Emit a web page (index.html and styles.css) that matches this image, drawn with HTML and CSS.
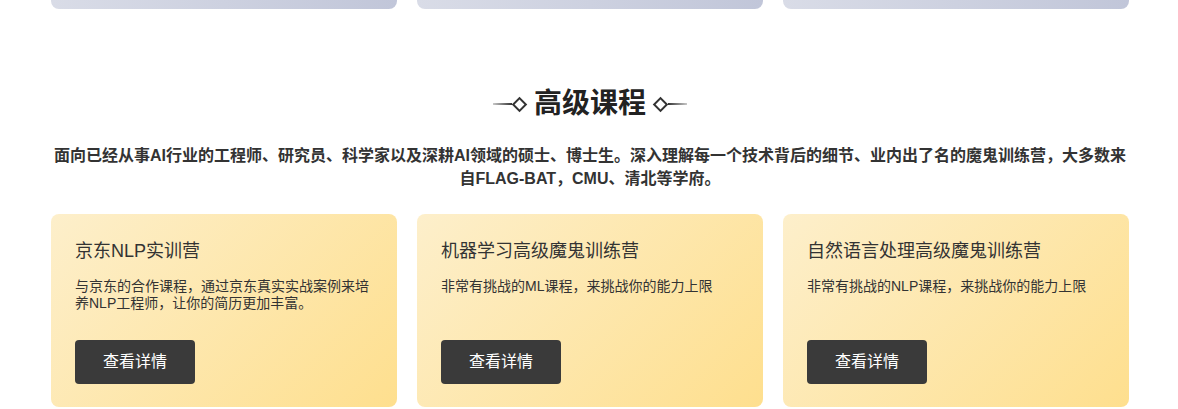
FILE: index.html
```html
<!DOCTYPE html>
<html lang="zh-CN">
<head>
    <meta charset="UTF-8">
    <meta name="viewport" content="width=device-width, initial-scale=1.0">
    <title>高级课程</title>
    <link rel="stylesheet" href="styles.css">
</head>
<body>
    <!-- 上一节课程卡片的底部 -->
    <div class="container top-row">
        <div class="card-tail"></div>
        <div class="card-tail"></div>
        <div class="card-tail"></div>
    </div>

    <section class="container advanced">
        <h2 class="section-title">
            <span class="deco deco-left"><i class="line"></i><i class="diamond"></i></span>
            高级课程
            <span class="deco deco-right"><i class="diamond"></i><i class="line"></i></span>
        </h2>
        <p class="section-desc">面向已经从事AI行业的工程师、研究员、科学家以及深耕AI领域的硕士、博士生。深入理解每一个技术背后的细节、业内出了名的魔鬼训练营，大多数来自FLAG-BAT，CMU、清北等学府。</p>

        <div class="course-list">
            <div class="course-card">
                <h3>京东NLP实训营</h3>
                <p>与京东的合作课程，通过京东真实实战案例来培养NLP工程师，让你的简历更加丰富。</p>
                <a class="btn" href="#">查看详情</a>
            </div>
            <div class="course-card">
                <h3>机器学习高级魔鬼训练营</h3>
                <p>非常有挑战的ML课程，来挑战你的能力上限</p>
                <a class="btn" href="#">查看详情</a>
            </div>
            <div class="course-card">
                <h3>自然语言处理高级魔鬼训练营</h3>
                <p>非常有挑战的NLP课程，来挑战你的能力上限</p>
                <a class="btn" href="#">查看详情</a>
            </div>
        </div>
    </section>
</body>
</html>
```

FILE: styles.css
```css
/* 全局 */
body {
    margin: 0;
    font-family: "Liberation Sans", "Noto Sans CJK SC", sans-serif;
    background-color: #ffffff;
    color: #333333;
}

.container {
    width: 1078px;
    margin-left: calc(50% - 538px);
}

/* 上一节卡片的尾部 */
.top-row {
    display: grid;
    grid-template-columns: repeat(3, 1fr);
    gap: 20px;
}
.card-tail {
    height: 9px;
    border-radius: 0 0 8px 8px;
    background: linear-gradient(90deg, #d9dce7, #c1c6d9);
}

/* 标题 */
.advanced {
    padding-top: 75px;
}
.section-title {
    display: flex;
    align-items: center;
    justify-content: center;
    gap: 7px;
    margin: 0;
    font-size: 28px;
    line-height: 40px;
    font-weight: bold;
    color: #222222;
}
.deco {
    display: flex;
    align-items: center;
}
.deco .line {
    display: block;
    width: 19px;
    height: 2px;
    background: linear-gradient(90deg, #c8c8c8, #333333);
}
.deco-right .line {
    background: linear-gradient(90deg, #333333, #c8c8c8);
}
.deco .diamond {
    display: block;
    width: 7px;
    height: 7px;
    margin: 0 2px;
    border: 2px solid #333333;
    transform: rotate(45deg);
}

.section-desc {
    margin: 20px 0 0;
    font-size: 16px;
    line-height: 23px;
    font-weight: bold;
    text-align: center;
    color: #333333;
}

/* 课程卡片 */
.course-list {
    display: grid;
    grid-template-columns: repeat(3, 1fr);
    gap: 20px;
    margin-top: 24px;
}
.course-card {
    display: flex;
    flex-direction: column;
    align-items: flex-start;
    height: 193px;
    box-sizing: border-box;
    padding: 24px 24px 23px;
    border-radius: 8px;
    background: linear-gradient(135deg, #fdefcb, #fedf8e);
}
.course-card h3 {
    margin: 0;
    font-size: 18px;
    line-height: 26px;
    font-weight: normal;
    color: #333333;
}
.course-card p {
    margin: 14px 0 0;
    font-size: 14px;
    line-height: 16.5px;
    color: #333333;
}
.btn {
    display: block;
    margin-top: auto;
    width: 120px;
    height: 44px;
    line-height: 44px;
    text-align: center;
    border-radius: 4px;
    background-color: #3a3a3a;
    color: #ffffff;
    font-size: 16px;
    text-decoration: none;
}
```
